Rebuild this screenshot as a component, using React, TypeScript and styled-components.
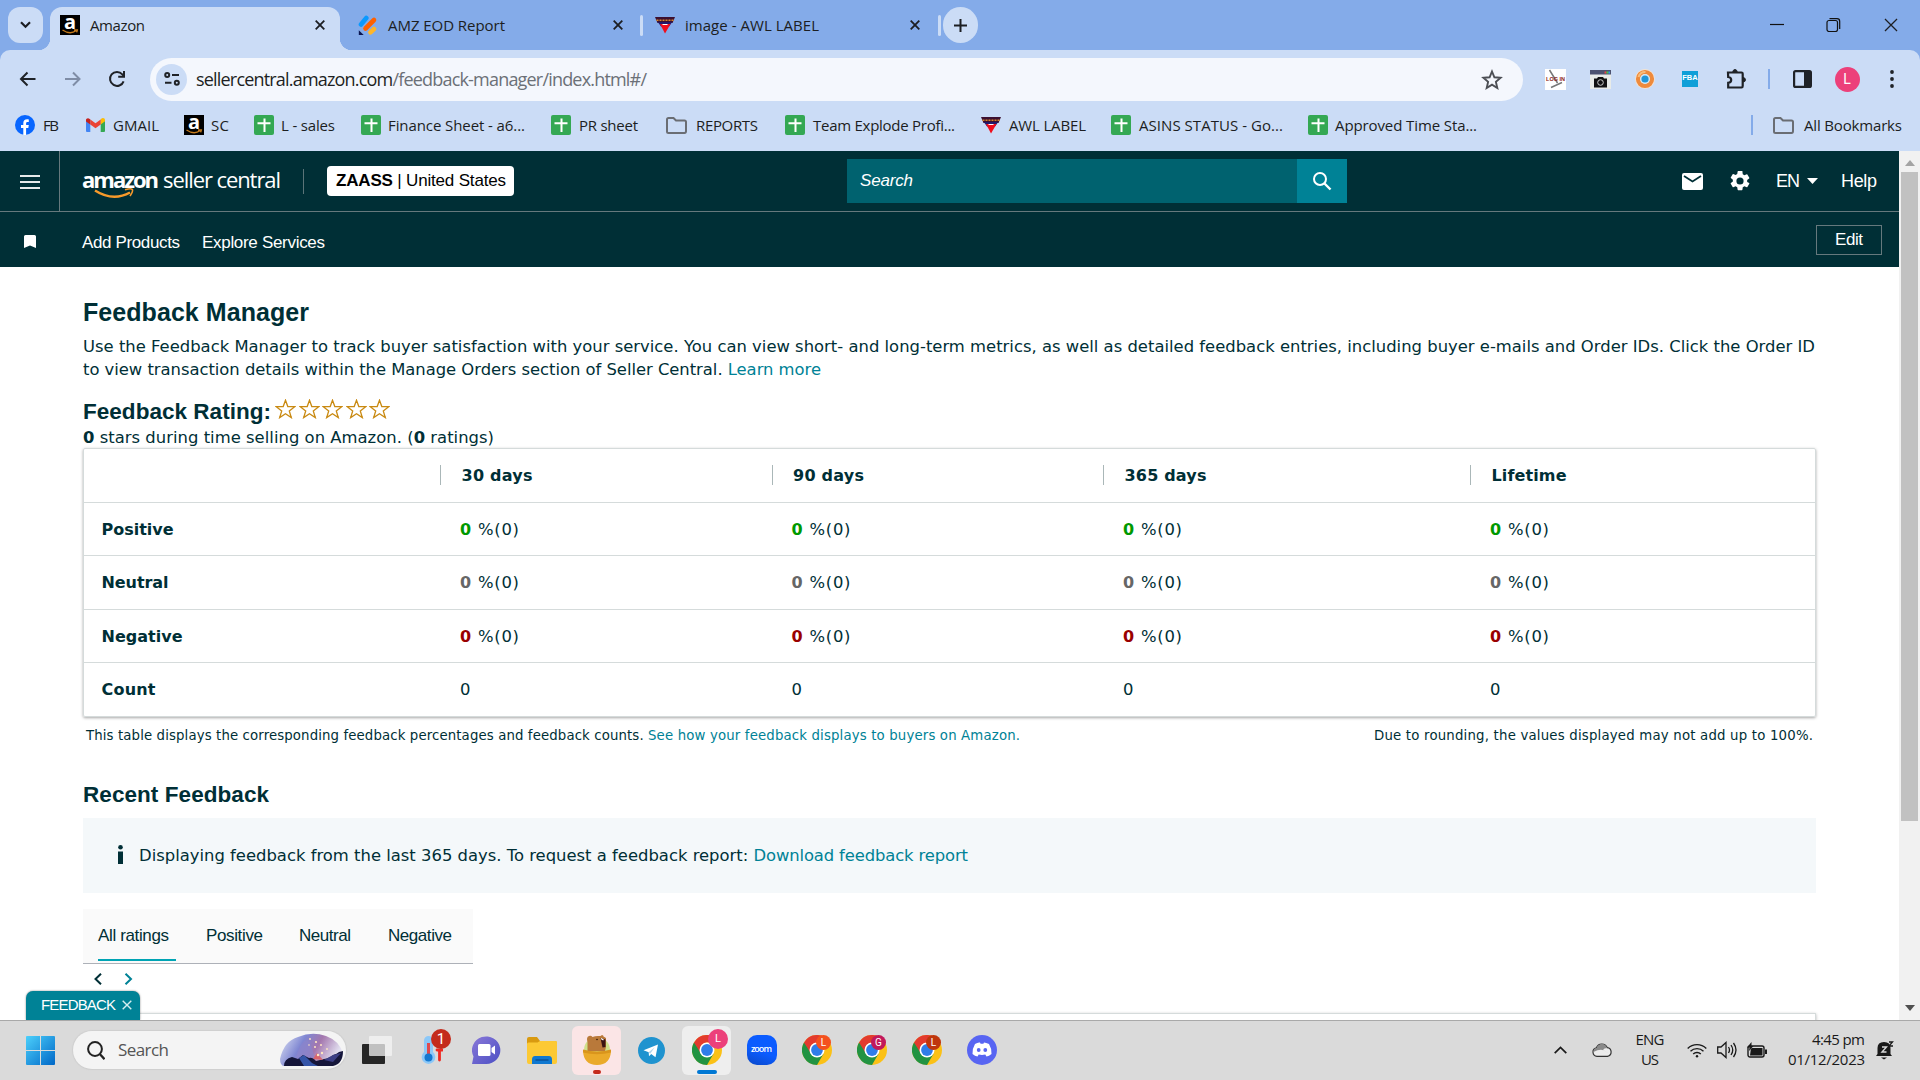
import React, { useLayoutEffect, useRef, useState } from "react";
import styled, { createGlobalStyle, css } from "styled-components";

const ui = `"Open Sans", "Noto Sans", sans-serif`;
const arial = `"Liberation Sans", Arial, sans-serif`;
const verdana = `"DejaVu Sans", Verdana, sans-serif`;
const ink = "#002f36";
const teal = "#008296";

const Global = createGlobalStyle`
  * { box-sizing: border-box; }
  body { margin: 0; overflow: hidden; background: #fff; }
  svg { display: block; flex: none; }
`;

/* ---------- text that fills a known measure ---------- */

const Measured = styled.span`
  display: inline-block;
  white-space: pre;
  flex: none;
`;

function Fit({ w, children }: { w: number; children: React.ReactNode }) {
  const ref = useRef<HTMLSpanElement>(null);
  const [spacing, setSpacing] = useState(0);
  useLayoutEffect(() => {
    const el = ref.current;
    if (!el) return;
    const count = (el.textContent || "").length;
    const natural = el.getBoundingClientRect().width;
    if (count > 1) setSpacing((w - natural) / (count - 1));
  }, [w]);
  return (
    <Measured ref={ref} style={{ letterSpacing: spacing, marginRight: -spacing }}>
      {children}
    </Measured>
  );
}

/* ---------- browser chrome ---------- */

const Screen = styled.div`
  width: 1920px;
  height: 1080px;
  display: flex;
  flex-direction: column;
  overflow: hidden;
`;

const TabStrip = styled.div`
  height: 50px;
  flex: none;
  display: flex;
  padding-left: 8px;
  background: #84abe9;
  font: 15px/36px ${ui};
  color: #1c1e22;
`;

const RoundButton = styled.div<{ $r: number }>`
  width: 35px;
  height: 36px;
  margin-top: 7px;
  border-radius: ${(p) => p.$r}px;
  background: #cbdcf6;
  display: flex;
  align-items: center;
  justify-content: center;
`;

const Tab = styled.div<{ $w: number; $pad: number; $end: number; $active?: boolean }>`
  position: relative;
  width: ${(p) => p.$w}px;
  height: 43px;
  margin-top: 7px;
  padding: 0 ${(p) => p.$end}px 7px ${(p) => p.$pad}px;
  display: flex;
  align-items: center;
  gap: 10px;
  ${(p) =>
    p.$active &&
    css`
      margin-left: 7px;
      background: #cbdcf6;
      border-radius: 12px 12px 0 0;
      &::before,
      &::after {
        content: "";
        position: absolute;
        bottom: 0;
        width: 12px;
        height: 12px;
      }
      &::before {
        left: -12px;
        background: radial-gradient(circle at 0 0, transparent 12px, #cbdcf6 12.5px);
      }
      &::after {
        right: -12px;
        background: radial-gradient(circle at 100% 0, transparent 12px, #cbdcf6 12.5px);
      }
    `}
`;

const Spacer = styled.div`
  flex: 1;
`;

const TabRule = styled.div`
  width: 3px;
  height: 21px;
  margin-top: 15px;
  border-radius: 2px;
  background: #cbdcf6;
`;

const WindowButtons = styled.div`
  display: flex;
  align-items: center;
  gap: 40px;
  height: 49px;
  padding-right: 22px;
`;

const ToolbarBack = styled.div`
  background: #84abe9;
  flex: none;
`;

const Toolbar = styled.div`
  height: 58px;
  padding-top: 8px;
  display: flex;
  background: #cbdcf6;
  border-radius: 10px 10px 0 0;
`;

const NavButtons = styled.div`
  width: 150px;
  height: 43px;
  display: flex;
  align-items: center;
  gap: 25px;
  padding: 0 0 2px 18px;
`;

const Omnibox = styled.div`
  width: 1373px;
  height: 43px;
  padding: 0 20px 1px 6px;
  display: flex;
  align-items: center;
  border-radius: 22px;
  background: #f4f7fd;
  font: 18px/42px ${ui};
  color: #1d1f23;
  em {
    font-style: normal;
    color: #6b7077;
  }
`;

const SiteInfo = styled.div`
  width: 31px;
  height: 31px;
  margin-right: 9px;
  border-radius: 50%;
  background: #cbdcf6;
  display: flex;
  align-items: center;
  justify-content: center;
`;

const Slot = styled.div<{ $w: number }>`
  width: ${(p) => p.$w}px;
  height: 42px;
  flex: none;
  display: flex;
  align-items: center;
  justify-content: center;
`;

const Extensions = styled.div`
  display: flex;
  padding-left: 10px;
`;

const LogIn = styled.div`
  width: 21px;
  height: 21px;
  background: #fff;
`;

const Fba = styled.div`
  width: 16px;
  height: 16px;
  background: #0f9fd8;
  color: #fff;
  font: bold 7.5px/14px ${arial};
  text-align: center;
`;

const Avatar = styled.div<{ $size: number; $bg: string; $font: number }>`
  width: ${(p) => p.$size}px;
  height: ${(p) => p.$size}px;
  border-radius: 50%;
  background: ${(p) => p.$bg};
  color: #fff;
  font: ${(p) => p.$font}px/${(p) => p.$size}px Roboto, sans-serif;
  text-align: center;
`;

const VRule = styled.div`
  width: 2px;
  height: 20px;
  background: #84abe9;
`;

const Bookmarks = styled.div`
  height: 43px;
  flex: none;
  display: flex;
  align-items: center;
  padding: 0 0 9px 15px;
  background: #cbdcf6;
  font: 15px/20px ${ui};
  color: #1c1e22;
`;

const Bookmark = styled.div<{ $w: number; $gap?: number }>`
  width: ${(p) => p.$w}px;
  flex: none;
  display: flex;
  align-items: center;
  gap: ${(p) => p.$gap ?? 8}px;
`;

/* ---------- page ---------- */

const Viewport = styled.div`
  flex: none;
  height: 869px;
  display: flex;
`;

const Page = styled.div`
  position: relative;
  width: 1899px;
  height: 869px;
  overflow: hidden;
  background: #fff;
`;

const Header = styled.header`
  height: 61px;
  display: flex;
  align-items: center;
  background: ${ink};
  border-bottom: 1px solid #66797d;
  font: 17px/24px ${arial};
  color: #fff;
`;

const MenuCell = styled.div`
  width: 60px;
  height: 60px;
  padding: 1px 0 0 20px;
  border-right: 1px solid #66797d;
  display: flex;
  align-items: center;
`;

const Logo = styled.div`
  position: relative;
  width: 221px;
  margin-left: 22px;
  padding-bottom: 5px;
  display: flex;
  align-items: baseline;
  gap: 4px;
  font: 22px/30px ${ui};
  b {
    font-weight: 700;
  }
`;

const Smile = styled.svg`
  position: absolute;
  left: 12px;
  top: 24px;
`;

const LogoRule = styled.div`
  width: 1px;
  height: 25px;
  margin-right: 23px;
  background: #5b7478;
`;

const Store = styled.div`
  width: 187px;
  height: 30px;
  padding: 0 9px;
  border-radius: 4px;
  background: #fff;
  color: #000;
  line-height: 30px;
  white-space: pre;
`;

const SearchBar = styled.div`
  width: 500px;
  height: 44px;
  margin-left: 333px;
  margin-bottom: 1px;
  display: flex;
  background: #00626f;
  font-style: italic;
  line-height: 44px;
  padding-left: 13px;
  justify-content: space-between;
`;

const SearchButton = styled.div`
  width: 50px;
  height: 44px;
  background: ${teal};
  display: flex;
  align-items: center;
  justify-content: center;
`;

const HeaderTools = styled.div`
  margin-left: auto;
  padding-right: 22px;
  display: flex;
  align-items: center;
  font-size: 18px;
`;

const ToolGap = styled.div<{ $w: number }>`
  width: ${(p) => p.$w}px;
  flex: none;
`;

const SubNav = styled.nav`
  height: 55px;
  display: flex;
  align-items: center;
  background: ${ink};
  font: 17px/26px ${arial};
  color: #fff;
  padding: 5px 17px 0 24px;
`;

const QuickLinks = styled.div`
  display: flex;
  gap: 22px;
  padding: 2px 0 0 46px;
`;

const EditButton = styled.div`
  width: 66px;
  height: 30px;
  margin: 0 0 5px auto;
  border: 1px solid #66797d;
  line-height: 28px;
  text-align: center;
`;

const Main = styled.main`
  padding: 0 83px;
  font: 16.4px/23px ${verdana};
  color: ${ink};
  a {
    color: ${teal};
  }
`;

const H1 = styled.h1`
  margin: 0;
  padding-top: 29px;
  font: bold 25px/32px ${arial};
`;

const H2 = styled.h2<{ $top?: number }>`
  margin: 0;
  padding-top: ${(p) => p.$top ?? 0}px;
  display: flex;
  font: bold 22.5px/28px ${arial};
`;

const Intro = styled.div`
  margin-top: 7px;
  height: 46px;
`;

const Rating = styled.div`
  margin-top: 17px;
  height: 28px;
  display: flex;
`;

const Stars = styled.div`
  display: flex;
  gap: 2.6px;
  padding: 1px 0 0 4px;
`;

const Summary = styled.div`
  height: 23px;
  margin-top: 1px;
  line-height: 22px;
`;

const Table = styled.div`
  width: 1733px;
  margin-top: -2px;
  height: 269px;
  border: 1px solid #d5dbdb;
  border-radius: 2px;
  box-shadow: 0 1px 3px rgba(0, 0, 0, 0.35);
`;

const Row = styled.div<{ $h: number }>`
  height: ${(p) => p.$h}px;
  display: grid;
  grid-template-columns: 356px 331.5px 331.5px 367px 1fr;
  align-items: center;
  border-bottom: 1px solid #d5dbdb;
  &:last-child {
    border-bottom: 0;
  }
`;

const RowName = styled.div`
  padding-left: 17.5px;
  font-weight: bold;
  font-size: 16px;
`;

const HeadCell = styled.div`
  padding-left: 20.5px;
  height: 20px;
  margin-bottom: 2px;
  line-height: 22px;
  border-left: 1px solid #aab7b8;
  font-weight: bold;
  font-size: 16px;
`;

const Cell = styled.div`
  padding-left: 20px;
`;

const Score = styled.b<{ $tone: string }>`
  color: ${(p) => p.$tone};
  font-size: 16px;
`;

const Notes = styled.div`
  display: flex;
  width: 1733px;
  padding: 0 3px;
  margin-top: 9px;
  font-size: 13.3px;
  line-height: 20px;
`;

const InfoBox = styled.div`
  width: 1733px;
  height: 75px;
  margin-top: 9px;
  padding: 0 0 0 35px;
  display: flex;
  align-items: center;
  background: #f4f8fa;
`;

const InfoIcon = styled.svg`
  margin: 0 16px 2px 0;
`;

const RatingTabs = styled.div`
  width: 390px;
  height: 55px;
  margin-top: 16px;
  padding-left: 15px;
  display: flex;
  background: #fafafa;
  border-bottom: 1px solid #adb1b8;
  font: 17px/54px ${arial};
`;

const RatingTab = styled.div<{ $w: number; $on?: boolean }>`
  width: ${(p) => p.$w}px;
  height: 52px;
  flex: none;
  margin-right: 30px;
  ${(p) => p.$on && `border-bottom: 2px solid #00a4b4;`}
`;

const Pager = styled.div`
  display: flex;
  gap: 20px;
  padding: 9px 0 0 10px;
`;

const NextTable = styled.div`
  width: 1733px;
  height: 30px;
  margin-top: 28px;
  border: 1px solid #d5dbdb;
  box-shadow: 0 1px 3px rgba(0, 0, 0, 0.3);
`;

const FeedbackTag = styled.div`
  position: absolute;
  left: 26px;
  bottom: 0;
  width: 114px;
  height: 29px;
  padding: 0 0 1px 15px;
  display: flex;
  align-items: center;
  gap: 6px;
  border-radius: 7px 7px 0 0;
  background: ${teal};
  color: #fff;
  font: 15px/28px ${arial};
  box-shadow: 0 0 2px rgba(0, 0, 0, 0.5);
`;

const Scrollbar = styled.div`
  width: 21px;
  height: 869px;
  background: #f1f1f1;
  display: flex;
  flex-direction: column;
  align-items: center;
  padding: 9px 0 9px;
`;

const Thumb = styled.div`
  width: 17px;
  height: 649px;
  margin: 6px 0 auto;
  background: #c1c1c1;
`;

/* ---------- taskbar ---------- */

const Taskbar = styled.div`
  height: 60px;
  flex: none;
  display: flex;
  align-items: center;
  padding-left: 26px;
  background: #dadada;
  border-top: 1px solid #a9a9a9;
  font-family: ${ui};
  color: #1a1a1a;
`;

const SearchPill = styled.div`
  width: 273px;
  height: 38px;
  margin: 0 7px 1px 18px;
  padding: 0 3px 0 14px;
  display: flex;
  align-items: center;
  gap: 13px;
  border-radius: 20px;
  background: #f4f4f4;
  box-shadow: 0 0 1px 1px #cfcfcf;
  font: 17px/36px ${ui};
  color: #555;
`;

const Task = styled.div<{ $w?: number }>`
  position: relative;
  width: ${(p) => p.$w ?? 55}px;
  height: 59px;
  padding-bottom: 1px;
  flex: none;
  display: flex;
  align-items: center;
  justify-content: center;
`;

const Tile = styled.div<{ $bg: string; $bar: string; $barW: number }>`
  position: relative;
  width: 49px;
  height: 49px;
  border-radius: 6px;
  background: ${(p) => p.$bg};
  display: flex;
  align-items: center;
  justify-content: center;
  &::after {
    content: "";
    position: absolute;
    bottom: 1px;
    left: calc(50% - ${(p) => p.$barW / 2}px);
    width: ${(p) => p.$barW}px;
    height: 4px;
    border-radius: 2px;
    background: ${(p) => p.$bar};
  }
`;

const Badge = styled.div<{ $x: number; $y: number; $size: number; $bg: string; $font: number }>`
  position: absolute;
  left: ${(p) => p.$x}px;
  top: ${(p) => p.$y}px;
  width: ${(p) => p.$size}px;
  height: ${(p) => p.$size}px;
  border-radius: 50%;
  background: ${(p) => p.$bg};
  color: #fff;
  font: ${(p) => p.$font}px/${(p) => p.$size}px Roboto, sans-serif;
  text-align: center;
`;

const ZoomLogo = styled.div`
  width: 30px;
  height: 30px;
  border-radius: 10px;
  background: linear-gradient(200deg, #0b5cff 55%, #0a48c8);
  color: #fff;
  font: 600 9px/27px ${ui};
  text-align: center;
`;

const Tray = styled.div`
  margin-left: auto;
  padding: 0 26px 1px 0;
  display: flex;
  align-items: center;
`;

const TrayText = styled.div<{ $align: string; $w: number }>`
  width: ${(p) => p.$w}px;
  padding-bottom: 3px;
  text-align: ${(p) => p.$align};
  font: 15px/20px ${ui};
`;

/* ---------- icons ---------- */

const Close = ({ s = 10, c = "#1c1e22", w = 1.8 }) => (
  <svg width={s} height={s} viewBox="0 0 10 10" stroke={c} strokeWidth={w} fill="none">
    <path d="M.7.7l8.6 8.6M9.3.7L.7 9.3" />
  </svg>
);

const AmazonIcon = () => (
  <svg width="20" height="20" viewBox="0 0 20 20" overflow="visible">
    <rect width="20" height="20" fill="#000" />
    <text x="10" y="13.600" fontSize="20" fontWeight="bold" fontFamily="Open Sans" fill="#fff" textAnchor="middle">
      a
    </text>
    <path d="M2.500 15q7.500 5 13.500.8M14 15h3.300l-.6 2.400" stroke="#c47a1c" strokeWidth="1.400" fill="none" />
  </svg>
);

const JotIcon = () => (
  <svg width="20" height="20" viewBox="0 0 20 20" strokeLinecap="round" strokeWidth="4.600">
    <path d="M3 9.500L8.300 3" stroke="#0a99ff" />
    <path d="M7.500 13.500L16 5" stroke="#ff6100" />
    <path d="M12.500 17.300L16 14" stroke="#ffb629" />
    <path d="M.8 15.200v4.800h4.900z" fill="#0a1551" />
  </svg>
);

const AwlIcon = () => (
  <svg width="20" height="18" viewBox="0 0 20 18">
    <path d="M0 1h20l-2.500 6H2.500z" fill="#3c1030" />
    <path d="M1.500 4.200h17" stroke="#d8842c" strokeWidth="1.500" strokeDasharray="2 1" />
    <path d="M2.800 6h14.400L14 10.500H6z" fill="#23186a" />
    <path d="M5 8h10.500L10 17.500z" fill="#f00d1c" />
    <path d="M7.500 8.500h5" stroke="#fff" strokeWidth="1" />
  </svg>
);

const SheetIcon = () => (
  <svg width="20" height="20" viewBox="0 0 20 20">
    <rect width="20" height="20" rx="2" fill="#34a853" />
    <path d="M10.500 3.500v13.500M3.500 8.200h13" stroke="#fff" strokeWidth="2" />
  </svg>
);

const FacebookIcon = () => (
  <svg width="20" height="20" viewBox="0 0 20 20">
    <circle cx="10" cy="10" r="10" fill="#0866ff" />
    <path d="M8.300 20v-7H6V10h2.300V8.300C8.300 5.400 9.700 4.200 12.100 4.200c.7 0 1.300.1 1.700.2v2.700h-1.300c-1 0-1.400.5-1.400 1.500V10h2.700l-.5 3h-2.200v7z" fill="#fff" />
  </svg>
);

const GmailIcon = () => (
  <svg width="19" height="14" viewBox="0 0 19 15" preserveAspectRatio="none">
    <path d="M0 3v11q0 1 1 1h3.300V6z" fill="#4285f4" />
    <path d="M14.700 6v9H18q1 0 1-1V3z" fill="#34a853" />
    <path d="M14.700 1.600V7L19 3.600V2.200C19 .2 16.700-.6 15.200.9z" fill="#fbbc04" />
    <path d="M4.300 7V1.500l5.200 4 5.200-4V7l-5.200 4z" fill="#ea4335" />
    <path d="M0 2.200v1.600L4.300 7V1.500L3.700 1C2.200-.5 0 .3 0 2.200z" fill="#c5221f" />
  </svg>
);

const FolderIcon = () => (
  <svg width="21" height="17" viewBox="0 0 21 17" fill="none" stroke="#6a6d73" strokeWidth="2">
    <path d="M1 2.500Q1 1 2.500 1h5l2.500 2.500h8.500q1.500 0 1.500 1.500v9q0 2-1.500 2h-16Q1 16 1 14.500z" />
  </svg>
);

const Chrome = () => (
  <svg width="30" height="30" viewBox="0 0 30 30">
    <circle cx="15" cy="15" r="15" fill="#fbc116" />
    <path d="M2 7.500A15 15 0 0 0 15 30l6.500-11.300L15 15z" fill="#229342" />
    <path d="M2 7.500A15 15 0 0 1 28 7.500H15Q10 8 8.400 12.500L8 17z" fill="#e33b2e" />
    <circle cx="15" cy="15" r="7.500" fill="#fff" />
    <circle cx="15" cy="15" r="5.900" fill="#2f7de9" />
  </svg>
);

const ThinStar = () => (
  <svg width="21" height="20" viewBox="0 0 21 20" fill="none" stroke="#c98a12" strokeWidth="1.300">
    <path d="M10.500 1.200l2.300 6.300 6.900.2-5.400 4.200 2 6.700-5.800-3.900-5.800 3.900 2-6.700-5.400-4.200 6.900-.2z" />
  </svg>
);

const Triangle = ({ up }: { up?: boolean }) => (
  <svg width="10" height="6" viewBox="0 0 10 6">
    <path d={up ? "M0 6L5 0l5 6z" : "M0 0l5 6 5-6z"} fill={up ? "#a3a3a3" : "#505050"} />
  </svg>
);

const Magnifier = () => (
  <svg width="20" height="20" viewBox="0 0 20 20" fill="none" stroke="#fff" strokeWidth="2">
    <circle cx="8" cy="8" r="6" />
    <path d="M12 12l6.500 6.500" strokeWidth="2.400" />
  </svg>
);

/* ---------- content ---------- */

const bookmarks: [number, React.ReactNode, string, number, number?][] = [
  [71, <FacebookIcon />, "FB", 16],
  [98, <GmailIcon />, "GMAIL", 46],
  [70, <AmazonIcon />, "SC", 18, 7],
  [107, <SheetIcon />, "L - sales", 54, 7],
  [190, <SheetIcon />, "Finance Sheet - a6...", 137, 7],
  [115, <SheetIcon />, "PR sheet", 59],
  [119, <FolderIcon />, "REPORTS", 62, 9],
  [196, <SheetIcon />, "Team Explode Profi...", 142],
  [130, <AwlIcon />, "AWL LABEL", 77],
  [197, <SheetIcon />, "ASINS STATUS - Go...", 144],
  [443, <SheetIcon />, "Approved Time Sta...", 142, 7],
];

const rows: [string, number, string, number][] = [
  ["Positive", 53, "#009900", 72],
  ["Neutral", 54, "#666666", 67],
  ["Negative", 53, "#990000", 81],
];

export default function App() {
  return (
    <Screen>
      <Global />
      <TabStrip>
        <RoundButton $r={12}>
          <svg width="11" height="8" viewBox="0 0 11 8" fill="none" stroke="#1c1e22" strokeWidth="2.200">
            <path d="M1 1.200l4.500 4.500L10 1.200" />
          </svg>
        </RoundButton>
        <Tab $w={290} $pad={10} $end={15} $active>
          <AmazonIcon />
          <Fit w={55}>Amazon</Fit>
          <Spacer />
          <Close />
        </Tab>
        <Tab $w={300} $pad={18} $end={17}>
          <JotIcon />
          <Fit w={117}>AMZ EOD Report</Fit>
          <Spacer />
          <Close />
        </Tab>
        <TabRule />
        <Tab $w={295} $pad={12} $end={18}>
          <AwlIcon />
          <Fit w={134}>image - AWL LABEL</Fit>
          <Spacer />
          <Close />
        </Tab>
        <TabRule />
        <ToolGap $w={2} />
        <RoundButton $r={18}>
          <svg width="13" height="13" viewBox="0 0 13 13" stroke="#1c1e22" strokeWidth="2">
            <path d="M6.500 0v13M0 6.500h13" />
          </svg>
        </RoundButton>
        <Spacer />
        <WindowButtons>
          <svg width="14" height="14" viewBox="0 0 14 14" stroke="#111" strokeWidth="1.200">
            <path d="M0 6.500h14" />
          </svg>
          <svg width="20" height="14" viewBox="0 0 20 14" fill="none" stroke="#111" strokeWidth="1.200">
            <rect x="3" y="2.500" width="10.500" height="11" rx="2" />
            <path d="M5.500.7h7.500q2.700 0 2.700 2.700v7.500" />
          </svg>
          <Close s={14} w={0.9} />
        </WindowButtons>
      </TabStrip>

      <ToolbarBack>
        <Toolbar>
          <NavButtons>
            <svg width="20" height="18" viewBox="0 0 20 18" fill="none" stroke="#1f2227" strokeWidth="2">
              <path d="M17.500 9H3M9.500 2.500L3 9l6.500 6.500" />
            </svg>
            <svg width="20" height="18" viewBox="0 0 20 18" fill="none" stroke="#7f8da6" strokeWidth="2">
              <path d="M2 9h14.500M10 2.500L16.500 9 10 15.500" />
            </svg>
            <svg width="20" height="18" viewBox="0 0 20 18" fill="none" stroke="#1f2227" strokeWidth="2">
              <path d="M15.600 11.300A7 7 0 1 1 14.300 4.300L16 6.300" />
              <path d="M16 1v5.800h-5.800" />
            </svg>
          </NavButtons>
          <Omnibox>
            <SiteInfo>
              <svg width="16" height="14" viewBox="0 0 16 14" fill="none" stroke="#1f2227" strokeWidth="2">
                <circle cx="3.200" cy="3" r="2" />
                <path d="M8 3h7M1 10.800h6.500" />
                <circle cx="12.800" cy="10.800" r="2" />
              </svg>
            </SiteInfo>
            <Fit w={451}>
              sellercentral.amazon.com<em>/feedback-manager/index.html#/</em>
            </Fit>
            <Spacer />
            <svg width="22" height="21" viewBox="0 0 22 21" fill="none" stroke="#4c4f55" strokeWidth="1.900">
              <path d="M11 2.500l2.400 5.800 6.200.5-4.700 4.100 1.400 6.100-5.300-3.300L5.700 19l1.400-6.100-4.700-4.100 6.200-.5z" />
            </svg>
          </Omnibox>
          <Extensions>
            <Slot $w={45}>
              <LogIn>
                <svg width="21" height="21" viewBox="0 0 21 21">
                  <path d="M4.500 1l8 13M6 18.500l11-5" stroke="#777" strokeWidth="1.500" />
                  <text x="10.500" y="11.500" fontSize="5.500" fontWeight="bold" fontFamily="Liberation Sans" fill="#8c1d18" textAnchor="middle">
                    LOG IN
                  </text>
                </svg>
              </LogIn>
            </Slot>
            <Slot $w={45}>
              <svg width="21" height="19" viewBox="0 0 21 19">
                <rect width="21" height="19" fill="#e8ebe8" />
                <rect width="21" height="4.500" fill="#4c5270" />
                <path d="M14.500 2.500h2" stroke="#e44" strokeWidth="2" />
                <path d="M16.500 2.500h2" stroke="#4c4" strokeWidth="2" />
                <path d="M18.500 2.500h1.500" stroke="#39f" strokeWidth="2" />
                <path d="M4 8.500h3l1-1.500h5l1 1.500h3v9H4z" fill="#111" />
                <circle cx="10.500" cy="12.500" r="2.800" fill="none" stroke="#ccc" />
              </svg>
            </Slot>
            <Slot $w={44}>
              <svg width="20" height="20" viewBox="0 0 20 20">
                <circle cx="10" cy="10" r="9.900" fill="#f6e3cf" />
                <circle cx="10" cy="10" r="6.900" fill="none" stroke="#ee8a3c" strokeWidth="4.400" />
                <path d="M3.500 8a7 7 0 0 1 7-5" fill="none" stroke="#f8bd7c" strokeWidth="2" />
                <circle cx="10" cy="10" r="5" fill="#cfe7f7" />
                <circle cx="10" cy="10" r="3.600" fill="#2196d8" />
              </svg>
            </Slot>
            <Slot $w={46}>
              <Fba>FBA</Fba>
            </Slot>
            <Slot $w={46}>
              <svg width="22" height="22" viewBox="0 0 22 22" fill="none" stroke="#1f2227" strokeWidth="2.200">
                <path d="M3 4.500h13.500q1.200 0 1.200 1.200V18q0 1.500-1.200 1.500H3.200v-4.700q3-.4 3-2.900T3.200 9z" />
                <path d="M7.800 4Q8 1.500 10 1.500T12.200 4zM18 9.500q2.500.2 2.500 2.300T18 14z" fill="#1f2227" strokeWidth="1" />
              </svg>
            </Slot>
            <Slot $w={19}>
              <VRule />
            </Slot>
            <Slot $w={48}>
              <svg width="19" height="18" viewBox="0 0 19 18">
                <rect x="1.100" y="1.100" width="16.800" height="15.800" rx="1.500" fill="none" stroke="#1f2227" strokeWidth="2.200" />
                <path d="M11 1h7v16h-7z" fill="#1f2227" />
              </svg>
            </Slot>
            <Slot $w={42}>
              <Avatar $size={25} $bg="#ec407a" $font={14}>
                L
              </Avatar>
            </Slot>
            <Slot $w={48}>
              <svg width="4" height="18" viewBox="0 0 4 18" fill="#1f2227">
                <circle cx="2" cy="2" r="1.900" />
                <circle cx="2" cy="9" r="1.900" />
                <circle cx="2" cy="16" r="1.900" />
              </svg>
            </Slot>
          </Extensions>
        </Toolbar>
      </ToolbarBack>

      <Bookmarks>
        {bookmarks.map(([w, icon, label, textW, gap]) => (
          <Bookmark key={label} $w={w} $gap={gap}>
            {icon}
            <Fit w={textW}>{label}</Fit>
          </Bookmark>
        ))}
        <Bookmark $w={22}>
          <VRule />
        </Bookmark>
        <Bookmark $w={140} $gap={10}>
          <FolderIcon />
          <Fit w={98}>All Bookmarks</Fit>
        </Bookmark>
      </Bookmarks>

      <Viewport>
        <Page>
          <Header>
            <MenuCell>
              <svg width="20" height="14" viewBox="0 0 20 14" stroke="#e6eaea" strokeWidth="2">
                <path d="M0 1h20M0 7h20M0 13h20" />
              </svg>
            </MenuCell>
            <Logo>
              <b>
                <Fit w={77}>amazon</Fit>
              </b>
              <Fit w={118}>seller central</Fit>
              <Smile width="40" height="12" viewBox="0 0 40 12" fill="none" stroke="#f79a2b" strokeWidth="2.400">
                <path d="M1 2.500Q19 14 36 4.500" />
                <path d="M31 1.800q7-2 7.500 0T36 8" strokeWidth="1.600" />
              </Smile>
            </Logo>
            <LogoRule />
            <Store>
              <Fit w={170}>
                <b>ZAASS</b> | United States
              </Fit>
            </Store>
            <SearchBar>
              <Fit w={53}>Search</Fit>
              <SearchButton>
                <Magnifier />
              </SearchButton>
            </SearchBar>
            <HeaderTools>
              <svg width="21" height="17" viewBox="0 0 21 17">
                <rect width="21" height="17" rx="2" fill="#fff" />
                <path d="M2 3l8.500 5.500L19 3" fill="none" stroke={ink} strokeWidth="1.800" />
              </svg>
              <ToolGap $w={25} />
              <svg width="24" height="24" viewBox="0 0 24 24" fill="#fff">
                <path d="M19.140 12.940a7.070 7.070 0 0 0 0-1.880l2.030-1.580a.5.500 0 0 0 .12-.61l-1.920-3.320a.49.490 0 0 0-.59-.22l-2.390.96a7 7 0 0 0-1.620-.94l-.36-2.540A.48.480 0 0 0 13.930 2h-3.840a.48.480 0 0 0-.48.410l-.36 2.540c-.59.240-1.130.57-1.620.94l-2.390-.96a.48.480 0 0 0-.59.220L2.740 8.470a.48.480 0 0 0 .12.610l2.030 1.580a7 7 0 0 0 0 1.880l-2.030 1.580a.5.500 0 0 0-.12.610l1.920 3.320c.12.220.37.290.59.220l2.390-.96c.5.380 1.030.7 1.620.94l.36 2.540c.5.240.24.410.48.410h3.840c.24 0 .44-.17.470-.41l.36-2.540a7 7 0 0 0 1.620-.94l2.390.96c.22.080.47 0 .59-.22l1.920-3.320a.5.500 0 0 0-.12-.61zM12 15.600a3.600 3.600 0 1 1 0-7.200 3.600 3.600 0 0 1 0 7.200z" />
              </svg>
              <ToolGap $w={24} />
              <Fit w={24}>EN</Fit>
              <ToolGap $w={7} />
              <svg width="11" height="6" viewBox="0 0 11 6" fill="#fff">
                <path d="M0 0h11L5.500 6z" />
              </svg>
              <ToolGap $w={23} />
              <Fit w={36}>Help</Fit>
            </HeaderTools>
          </Header>
          <SubNav>
            <svg width="12" height="14" viewBox="0 0 12 14" fill="#fff">
              <path d="M1.500 0h9Q12 0 12 1.500V13L6 10.500 0 13V1.500Q0 0 1.500 0z" />
            </svg>
            <QuickLinks>
              <Fit w={98}>Add Products</Fit>
              <Fit w={123}>Explore Services</Fit>
            </QuickLinks>
            <EditButton>
              <Fit w={28}>Edit</Fit>
            </EditButton>
          </SubNav>

          <Main>
            <H1>
              <Fit w={226}>Feedback Manager</Fit>
            </H1>
            <Intro>
              <Fit w={1732}>
                Use the Feedback Manager to track buyer satisfaction with your service. You can view short- and long-term metrics, as well as detailed feedback entries, including buyer e-mails and Order IDs. Click the Order ID
              </Fit>
              <br />
              <Fit w={738}>
                to view transaction details within the Manage Orders section of Seller Central. <a>Learn more</a>
              </Fit>
            </Intro>
            <Rating>
              <H2>
                <Fit w={188}>Feedback Rating:</Fit>
              </H2>
              <Stars>
                {[1, 2, 3, 4, 5].map((n) => (
                  <ThinStar key={n} />
                ))}
              </Stars>
            </Rating>
            <Summary>
              <Fit w={411}>
                <b>0</b> stars during time selling on Amazon. (<b>0</b> ratings)
              </Fit>
            </Summary>
            <Table>
              <Row $h={54}>
                <div />
                <HeadCell>
                  <Fit w={71}>30 days</Fit>
                </HeadCell>
                <HeadCell>
                  <Fit w={71}>90 days</Fit>
                </HeadCell>
                <HeadCell>
                  <Fit w={82}>365 days</Fit>
                </HeadCell>
                <HeadCell>
                  <Fit w={75}>Lifetime</Fit>
                </HeadCell>
              </Row>
              {rows.map(([name, h, tone, w]) => (
                <Row key={name} $h={h}>
                  <RowName>
                    <Fit w={w}>{name}</Fit>
                  </RowName>
                  {[0, 1, 2, 3].map((n) => (
                    <Cell key={n}>
                      <Fit w={59}>
                        <Score $tone={tone}>0</Score> %(0)
                      </Fit>
                    </Cell>
                  ))}
                </Row>
              ))}
              <Row $h={53}>
                <RowName>
                  <Fit w={54}>Count</Fit>
                </RowName>
                {[0, 1, 2, 3].map((n) => (
                  <Cell key={n}>0</Cell>
                ))}
              </Row>
            </Table>
            <Notes>
              <Fit w={562}>This table displays the corresponding feedback percentages and feedback counts. </Fit>
              <a>
                <Fit w={372}>See how your feedback displays to buyers on Amazon.</Fit>
              </a>
              <Spacer />
              <Fit w={439}>Due to rounding, the values displayed may not add up to 100%.</Fit>
            </Notes>
            <H2 $top={35}>
              <Fit w={186}>Recent Feedback</Fit>
            </H2>
            <InfoBox>
              <InfoIcon width="5" height="19" viewBox="0 0 5 19" fill={ink}>
                <circle cx="2.500" cy="2.300" r="2.300" />
                <path d="M0 6.500h5V19H0z" />
              </InfoIcon>
              <Fit w={614.500}>Displaying feedback from the last 365 days. To request a feedback report: </Fit>
              <a>
                <Fit w={214.500}>Download feedback report</Fit>
              </a>
            </InfoBox>
            <RatingTabs>
              <RatingTab $w={78} $on>
                <Fit w={71}>All ratings</Fit>
              </RatingTab>
              <RatingTab $w={63}>
                <Fit w={57}>Positive</Fit>
              </RatingTab>
              <RatingTab $w={59}>
                <Fit w={52}>Neutral</Fit>
              </RatingTab>
              <RatingTab $w={66}>
                <Fit w={64}>Negative</Fit>
              </RatingTab>
            </RatingTabs>
            <Pager>
              <svg width="10" height="12" viewBox="0 0 10 12" fill="none" stroke={ink} strokeWidth="2">
                <path d="M8 .7L2.500 6 8 11.300" />
              </svg>
              <svg width="10" height="12" viewBox="0 0 10 12" fill="none" stroke={teal} strokeWidth="2">
                <path d="M2.500.7L8 6l-5.500 5.300" />
              </svg>
            </Pager>
            <NextTable />
          </Main>
          <FeedbackTag>
            <Fit w={75}>FEEDBACK</Fit>
            <Close s={10} c="#d6eef1" w={1.4} />
          </FeedbackTag>
        </Page>
        <Scrollbar>
          <Triangle up />
          <Thumb />
          <Triangle />
        </Scrollbar>
      </Viewport>

      <Taskbar>
        <svg width="29" height="29" viewBox="0 0 29 29">
          <defs>
            <linearGradient id="win" x1="0" y1="0" x2="1" y2="1">
              <stop offset="0" stopColor="#4cd0fb" />
              <stop offset="1" stopColor="#0067c7" />
            </linearGradient>
          </defs>
          <path d="M0 1q0-1 1-1h13v14H0zM15 0h13q1 0 1 1v13H15zM0 15h14v14H1q-1 0-1-1zM15 15h14v13q0 1-1 1H15z" fill="url(#win)" />
        </svg>
        <SearchPill>
          <svg width="18" height="19" viewBox="0 0 18 19" fill="none" stroke="#222" strokeWidth="2">
            <circle cx="8" cy="8" r="6.900" />
            <path d="M12.800 13l4.700 5.200" strokeWidth="2.300" />
          </svg>
          <Fit w={51}>Search</Fit>
          <Spacer />
          <svg width="63" height="34" viewBox="0 0 63 34">
            <defs>
              <linearGradient id="sky" x1="0" y1="0" x2="1" y2="0.300">
                <stop offset="0" stopColor="#e4eaf6" />
                <stop offset="0.400" stopColor="#7f86d2" />
                <stop offset="0.650" stopColor="#a477ae" />
                <stop offset="1" stopColor="#e2e0f0" />
              </linearGradient>
            </defs>
            <path d="M0 26Q4 8 18 4 32-2 46 3q14 5 17 18-4 12-16 12H6Q0 34 0 26z" fill="url(#sky)" />
            <path d="M16 26Q20 8 27 7q5 4 8 20z" fill="#8a84cc" fillOpacity=".7" />
            <path d="M4 33q0-7 8-9l6 2 5-4 6 3q4-1 7 3l8-2q6-1 9-4 4-1 6-3l4-1q0 13-10 15z" fill="#15163a" />
            <path d="M19 25l5-3 8 8 6 3H24z" fill="#3555a8" />
            <path d="M44 27l9-5 8-2-8 9z" fill="#3c3f86" />
            <path d="M33 26l4-6 6 7z" fill="#d9646c" />
            <g fill="#ffe7c0">
              <circle cx="30" cy="6" r=".9" />
              <circle cx="36" cy="9" r="1.100" />
              <circle cx="41" cy="12" r="1" />
              <circle cx="35" cy="14" r="1" />
              <circle cx="42" cy="20" r="1.200" />
              <circle cx="47" cy="16" r=".9" />
              <circle cx="38" cy="22" r="1.200" />
              <circle cx="29" cy="12" r=".8" />
            </g>
          </svg>
        </SearchPill>

        <Task $w={51}>
          <svg width="33" height="28" viewBox="0 0 33 28">
            <rect x="0" y="8" width="23" height="20" rx="1" fill="#262626" />
            <rect x="7" y="0" width="23" height="20" rx="1" fill="#f4f4f4" fillOpacity=".75" />
          </svg>
        </Task>
        <Task>
          <svg width="22" height="28" viewBox="0 0 22 28">
            <path d="M3 4.500a4.500 4.500 0 0 1 9 0v11.500a6.800 6.800 0 1 1-9 0z" fill="#8cc8f8" />
            <path d="M7.500 7v14" stroke="#e0484c" strokeWidth="3" />
            <circle cx="7.500" cy="21.500" r="4" fill="#1478d0" />
            <path d="M18.500 14v10M16 14h5.500" stroke="#ee2a22" strokeWidth="2.800" strokeLinecap="round" />
          </svg>
          <Badge $x={27} $y={8} $size={20} $bg="#c42b1c" $font={15}>
            1
          </Badge>
        </Task>
        <Task>
          <svg width="29" height="28" viewBox="0 0 29 28">
            <defs>
              <linearGradient id="chat" x1="0" y1="0" x2="1" y2="1">
                <stop offset="0" stopColor="#8a78d8" />
                <stop offset="1" stopColor="#4b4fc4" />
              </linearGradient>
            </defs>
            <path d="M0 28l1.500-7.500A14.200 13.800 0 1 1 14 28z" fill="url(#chat)" />
            <rect x="6" y="8" width="12.500" height="12" rx="1.500" fill="#fff" />
            <path d="M19.500 12l3.500-2.500v9L19.500 16z" fill="#fff" />
          </svg>
        </Task>
        <Task>
          <svg width="30" height="27" viewBox="0 0 30 27">
            <path d="M0 2q0-2 2-2h8l3 4h15q2 0 2 2v6H0z" fill="#d99a10" />
            <path d="M0 7q0-1.500 1.500-1.500h9L13 4h15.500Q30 4 30 5.500V25q0 2-2 2H2q-2 0-2-2z" fill="#fcc934" />
            <path d="M5 27v-4.500q0-3.500 3-3.500h14q3 0 3 3.500V27z" fill="#0f78d0" />
            <path d="M8.500 23h13" stroke="#0a4f96" strokeWidth="1.400" />
          </svg>
        </Task>
        <Task>
          <Tile $bg="#fbe5e6" $bar="#c42b1c" $barW={8}>
            <svg width="28" height="30" viewBox="0 0 28 30">
              <circle cx="14" cy="15" r="13" fill="#cfe08a" />
              <path d="M4.500 16V7Q3 2 6 1q2-1 3.500 1 3-1.500 8-1l1.500-1q1.500 0 1.500 1.500L23 3v9l-1 4z" fill="#b9793a" />
              <path d="M17.500 3l5 1.500V12l-3 .5z" fill="#3a1412" />
              <path d="M18 3.500l2.500 1.500" stroke="#fff" strokeWidth="1.300" />
              <circle cx="14" cy="4.500" r=".8" fill="#2b1608" />
              <path d="M0 15.500Q14 18 28 15.500 27.500 30 14 30T0 15.500z" fill="#eaaa2a" />
              <path d="M0 14.500q14 4 28 0v3q-14 3.500-28 0z" fill="#d9951c" />
            </svg>
          </Tile>
        </Task>
        <Task>
          <svg width="27" height="27" viewBox="0 0 27 27">
            <circle cx="13.500" cy="13.500" r="13.500" fill="#1f93cf" />
            <path d="M5.500 13.300L20 7.500l-2.500 12.700-4.300-3.200-2.200 2.200-.3-4z" fill="#fff" />
            <path d="M10.700 15.200l6-5-4.500 6.500" fill="#b5d5ea" />
          </svg>
        </Task>
        <Task>
          <Tile $bg="#eeeeee" $bar="#0078d4" $barW={20}>
            <Chrome />
          </Tile>
          <Badge $x={29} $y={8} $size={20} $bg="#ec407a" $font={11}>
            L
          </Badge>
        </Task>
        <Task>
          <ZoomLogo>
            <Fit w={21}>zoom</Fit>
          </ZoomLogo>
        </Task>
        {[
          ["L", "#f4511e"],
          ["G", "#c2185b"],
          ["L", "#bf360c"],
        ].map(([letter, color]) => (
          <Task key={color}>
            <Chrome />
            <Badge $x={27} $y={14} $size={15} $bg={color} $font={10}>
              {letter}
            </Badge>
          </Task>
        ))}
        <Task>
          <svg width="30" height="30" viewBox="0 0 30 30">
            <circle cx="15" cy="15" r="15" fill="#5865f2" />
            <path d="M8 9q3-2 5-1.500l.6 1.200h2.800L17 7.500q2 .2 5 1.500 3 5 2.500 10-2.500 2-5 2.500L18.300 19.500q-3.300.8-6.600 0l-1.200 2Q8 21 5.500 19 5 14 8 9z" fill="#fff" />
            <circle cx="11.700" cy="15" r="1.900" fill="#5865f2" />
            <circle cx="18.300" cy="15" r="1.900" fill="#5865f2" />
          </svg>
        </Task>

        <Tray>
          <svg width="13" height="8" viewBox="0 0 13 8" fill="none" stroke="#1a1a1a" strokeWidth="1.700">
            <path d="M.7 7.200l5.800-5.800 5.800 5.800" />
          </svg>
          <ToolGap $w={25} />
          <svg width="20" height="14" viewBox="0 0 20 14">
            <path d="M5 13.300a4.300 4.300 0 0 1-.6-8.500 5.800 5.800 0 0 1 10.800-.2 4.400 4.400 0 0 1 .3 8.700z" fill="#ececec" stroke="#333" strokeWidth="1.200" />
            <path d="M1.500 8Q2 5 4.500 5 6.500 1 10 1t5 4q-3 0-4 2l7 4-6-3.500Q8 5.500 1.500 9z" fill="#8a8a8a" />
          </svg>
          <ToolGap $w={18} />
          <TrayText $align="center" $w={40}>
            <Fit w={29}>ENG</Fit>
            <Fit w={18}>US</Fit>
          </TrayText>
          <ToolGap $w={17} />
          <svg width="20" height="15" viewBox="0 0 20 15" fill="none" stroke="#1a1a1a" strokeWidth="1.400">
            <path d="M.7 5.500a13.200 13.200 0 0 1 18.600 0M3.500 8.300a9.200 9.200 0 0 1 13 0M6.200 11a5.400 5.400 0 0 1 7.600 0" />
            <circle cx="10" cy="13.300" r="1.200" fill="#1a1a1a" stroke="none" />
          </svg>
          <ToolGap $w={10} />
          <svg width="20" height="18" viewBox="0 0 20 18" fill="none" stroke="#1a1a1a" strokeWidth="1.300">
            <path d="M.7 6h3.300L9 1.500v15L4 12H.7z" />
            <path d="M11.500 6q2 3 0 6M14 4q3.500 5 0 10M16.500 2q5 7 0 14" />
          </svg>
          <ToolGap $w={10} />
          <svg width="20" height="16" viewBox="0 0 20 16">
            <rect x="1" y="4" width="16" height="11" rx="2" fill="none" stroke="#1a1a1a" strokeWidth="1.400" />
            <path d="M4 6h11.500v7.500H3zM18 7.500h2v4.500h-2zM4.500 0L0 5.500h2.500L2 9l4.500-5H4.500z" fill="#1a1a1a" />
          </svg>
          <TrayText $align="right" $w={98}>
            <Fit w={53}>4:45 pm</Fit>
            <Fit w={77}>01/12/2023</Fit>
          </TrayText>
          <ToolGap $w={11} />
          <svg width="18" height="19" viewBox="0 0 18 19">
            <path d="M1.500 13V7Q1.500 1 8 1t6.500 6v6l1.500 2H0z" fill="#1a1a1a" />
            <path d="M5 16.500h6l-3 2z" fill="#1a1a1a" />
            <path d="M6 6h4.500L6 11h4.500" fill="none" stroke="#dadada" strokeWidth="1.400" />
            <path d="M13 1h3.500L13 5h4" fill="none" stroke="#1a1a1a" strokeWidth="1.300" />
          </svg>
        </Tray>
      </Taskbar>
    </Screen>
  );
}
